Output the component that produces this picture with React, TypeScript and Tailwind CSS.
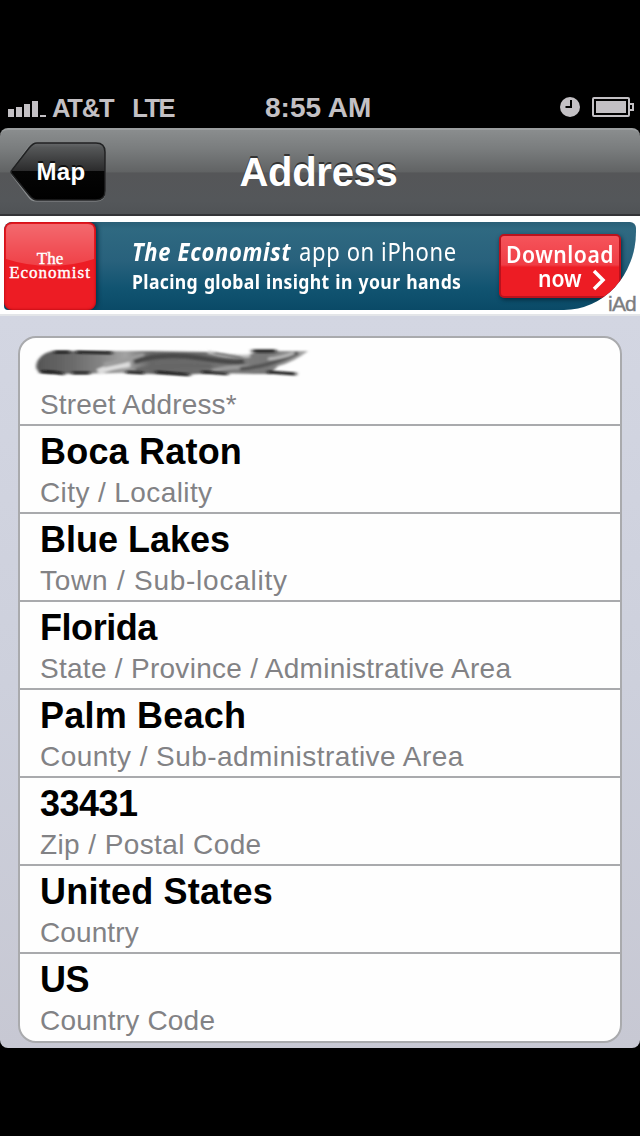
import React from 'react';

interface AddressField {
  value: string | null;
  label: string;
  valueClass?: string;
  labelClass?: string;
}

const fields: AddressField[] = [
  { value: null, label: 'Street Address*', labelClass: 'tracking-[0.15px]' },
  { value: 'Boca Raton', label: 'City / Locality', valueClass: 'tracking-[0.2px]', labelClass: 'tracking-[0.4px]' },
  { value: 'Blue Lakes', label: 'Town / Sub-locality', labelClass: 'tracking-[0.75px]' },
  { value: 'Florida', label: 'State / Province / Administrative Area', valueClass: 'tracking-[-0.45px]', labelClass: 'tracking-[0.28px]' },
  { value: 'Palm Beach', label: 'County / Sub-administrative Area', valueClass: 'tracking-[0.2px]', labelClass: 'tracking-[0.45px]' },
  { value: '33431', label: 'Zip / Postal Code', valueClass: 'tracking-[-0.5px]', labelClass: 'tracking-[0.4px]' },
  { value: 'United States', label: 'Country', valueClass: 'tracking-[0.23px]', labelClass: 'tracking-[0.1px]' },
  { value: 'US', label: 'Country Code', valueClass: 'tracking-[-0.5px]', labelClass: 'tracking-[0.2px]' },
];

const SignalBars = () => (
  <svg className="mt-[3px]" width="38" height="18" viewBox="0 0 38 18" fill="#c3c0c4">
    <rect x="0" y="9" width="6" height="8" />
    <rect x="8" y="7" width="6" height="10" />
    <rect x="16" y="4" width="6" height="13" />
    <rect x="24" y="1" width="6" height="16" />
    <rect x="32" y="15" width="6" height="2" />
  </svg>
);

const StatusBar = () => (
  <div className="h-12 pt-[6px] flex items-center justify-between pl-2 pr-[6px] text-[#c3c0c4] font-bold relative">
    <div className="flex items-center">
      <SignalBars />
      <span className="ml-[6px] pt-[2px] text-[25.5px] leading-10 tracking-[-1.2px]">AT&amp;T</span>
      <span className="ml-[19px] pt-[2px] text-[25.5px] leading-10 tracking-[-1.5px]">LTE</span>
    </div>
    <span className="absolute left-[265px] top-2 text-[28px] leading-10">8:55 AM</span>
    <div className="flex items-center gap-3">
      <svg width="20" height="20" viewBox="0 0 20 20">
        <circle cx="10" cy="10" r="10" fill="#c3c0c4" />
        <path d="M11 3V10H5.5" fill="none" stroke="#000" strokeWidth="2" />
      </svg>
      <svg width="42" height="20" viewBox="0 0 42 20" fill="none">
        <rect x="1" y="1" width="36" height="18" rx="1" stroke="#c3c0c4" strokeWidth="2" />
        <rect x="4" y="4" width="30" height="12" fill="#c3c0c4" />
        <path d="M38 7H41V13H38" stroke="#c3c0c4" strokeWidth="2" />
      </svg>
    </div>
  </div>
);

const BackButton = () => (
  <button className="relative w-24 h-[60px]">
    <svg className="absolute inset-0" width="96" height="60" viewBox="0 0 96 60">
      <defs>
        <linearGradient id="back" x1="0" y1="0" x2="0" y2="1">
          <stop offset="0" stopColor="#66686a" />
          <stop offset="0.08" stopColor="#555758" />
          <stop offset="0.49" stopColor="#2b2b2c" />
          <stop offset="0.5" stopColor="#050505" />
          <stop offset="1" stopColor="#000" />
        </linearGradient>
      </defs>
      <path
        d="M26 2.5H86Q95.5 2.5 95.5 11.5V50Q95.5 59.5 86 59.5H26Q21 59.5 18 55L2 34Q-1 30.5 2 27L17 6Q20 2 26 2.5Z"
        fill="#8b8e90"
      />
      <path
        d="M27 1H86Q95 1 95 10V49Q95 58 86 58H27Q23 58 19 53L2 32Q0 30 2 28L19 6Q23 1 27 1Z"
        fill="url(#back)"
        stroke="#202122"
        strokeWidth="1.5"
      />
    </svg>
    <span className="relative block pl-[6px] text-2xl leading-[56px] tracking-[0.4px] font-bold text-white [text-shadow:0_-2px_0_#111]">Map</span>
  </button>
);

const NavBar = () => (
  <header className="h-[88px] flex items-center pl-[10px] rounded-t-[8px] relative border-t-2 border-[#9b9e9f] border-b-2 border-b-[#333437] bg-[linear-gradient(180deg,#8a8d8e_0%,#7a7d7e_22%,#616364_50%,#555658_51%,#54575a_85%,#505356_100%)]">
    <BackButton />
    <h1 className="absolute left-0 right-0 -ml-[3px] text-center text-[40px] leading-[82px] tracking-[-0.3px] font-bold text-white [text-shadow:0_-2px_0_#333]">
      Address
    </h1>
  </header>
);

const AdBanner = () => (
  <section className="relative h-[100px] pt-[6px] pl-1 pr-1 bg-white border-b-2 border-[#e3e5e8]">
    <div className="relative flex h-[88px] overflow-hidden rounded-tl-[8px] rounded-bl-[4px] rounded-tr-[6px] rounded-br-[72px_78px] bg-[linear-gradient(180deg,#2a5f77_0%,#2f6981_8%,#28617c_45%,#115471_75%,#0a4a67_100%)]">
      <div className="relative w-[92px] h-[88px] shrink-0 rounded-lg overflow-hidden bg-[#ed1c24] shadow-[2px_0_4px_#063449,inset_0_0_3px_#a8000a] flex flex-col items-center justify-center text-white font-['Liberation_Serif',serif]">
        <svg className="absolute inset-0" width="92" height="88" viewBox="0 0 92 88">
          <defs>
            <linearGradient id="gloss" x1="0" y1="0" x2="0" y2="1">
              <stop offset="0" stopColor="#fff" stopOpacity="0.34" />
              <stop offset="1" stopColor="#fff" stopOpacity="0.16" />
            </linearGradient>
          </defs>
          <path d="M2 8Q2 2 8 2H84Q90 2 90 8V37Q46 51 2 37Z" fill="url(#gloss)" />
        </svg>
        <span className="relative text-[17px] leading-[14px] [-webkit-text-stroke:0.4px_#fff]">The</span>
        <span className="relative text-[17px] leading-[14px] tracking-[1px] whitespace-nowrap [-webkit-text-stroke:0.4px_#fff]">Economist</span>
      </div>
      <div className="ml-[36px] pt-3 text-white font-['Noto_Sans',sans-serif] whitespace-nowrap">
        <p className="w-[330px] origin-left scale-x-[0.88] text-[25px] leading-[34px]">
          <span className="font-bold italic tracking-[0.75px]">The Economist</span>
          <span className="ml-[9px] tracking-[0.7px]">app on iPhone</span>
        </p>
        <p className="w-[330px] origin-left scale-x-[0.88] text-[20px] leading-[28px] tracking-[0.4px] [word-spacing:1px] font-bold">Placing global insight in your hands</p>
      </div>
      <button className="absolute left-[495px] top-3 w-[122px] h-[64px] rounded-[5px] border-2 border-[#b9121d] bg-[linear-gradient(180deg,#f5545b_0%,#f03d45_48%,#ed1c24_52%,#ed1c24_100%)] shadow-[1px_2px_4px_#052c40] text-white font-semibold font-['Noto_Sans',sans-serif]">
        <span className="flex h-[26px] justify-center scale-x-[0.9] text-[23.5px] leading-[26px] pt-[2px] tracking-[0.6px] whitespace-nowrap">Download</span>
        <span className="flex h-[26px] items-center pl-[37px] gap-[5px] mt-[2px]">
          <span className="origin-left scale-x-[0.9] text-[23.5px] leading-[22px] -mt-[5px]">now</span>
          <svg width="14" height="22" viewBox="0 0 14 22" fill="none" stroke="#fff" strokeWidth="3.5">
            <path d="M2 2L11 11L2 20" />
          </svg>
        </span>
      </button>
    </div>
    <span className="absolute right-[4px] bottom-[-2px] text-[21px] leading-6 tracking-[-0.8px] text-[#7c7d80] [-webkit-text-stroke:0.4px_#7c7d80]">iAd</span>
  </section>
);

// Blacked out street line, smeared by hand
const Smudge = () => (
  <svg className="-ml-2 block" width="280" height="40" viewBox="0 0 280 40">
    <defs>
      <filter id="soft" x="-5%" y="-20%" width="110%" height="140%">
        <feGaussianBlur stdDeviation="1.6 1.1" />
      </filter>
      <filter id="fine" x="-5%" y="-20%" width="110%" height="140%">
        <feGaussianBlur stdDeviation="2.2 0.8" />
      </filter>
      <linearGradient id="ink" x1="0" y1="0" x2="1" y2="0">
        <stop offset="0" stopColor="#555" />
        <stop offset="0.14" stopColor="#6c6c6c" />
        <stop offset="0.24" stopColor="#858585" />
        <stop offset="0.33" stopColor="#a4a4a4" />
        <stop offset="0.42" stopColor="#666" />
        <stop offset="0.6" stopColor="#6a6a6a" />
        <stop offset="0.75" stopColor="#7c7c7c" />
        <stop offset="0.85" stopColor="#777" />
        <stop offset="1" stopColor="#aaa" />
      </linearGradient>
    </defs>
    <g filter="url(#soft)">
      <path d="M6 16Q12 7 24 7L110 7L178 8L214 12L226 7H276Q262 18 246 22L238 30L222 30L180 29L150 31L90 29L18 30Q-1 29 6 16Z" fill="url(#ink)" />
      <path d="M66 28Q78 22 98 20" stroke="#ddd" strokeWidth="6" fill="none" />
      <path d="M72 21Q94 17 112 11" stroke="#9c9c9c" strokeWidth="5" fill="none" />
      <path d="M102 18Q130 8 168 14T212 17" stroke="#4a4a4a" strokeWidth="5" fill="none" />
      <path d="M104 26Q134 21 180 22" stroke="#666" strokeWidth="4" fill="none" />
      <path d="M180 27Q204 21 222 24" stroke="#9a9a9a" strokeWidth="4" fill="none" />
      <path d="M176 8Q194 13 218 12" stroke="#c4c4c4" strokeWidth="3" fill="none" />
      <path d="M208 25Q236 23 266 9" stroke="#555" strokeWidth="4" fill="none" />
      <path d="M236 15Q250 14 262 9" stroke="#b5b5b5" strokeWidth="3" fill="none" />
    </g>
    <g filter="url(#fine)" stroke="#111" fill="none" strokeWidth="2.5">
      <path d="M22 8L38 8" />
      <path d="M44 8L80 9" />
      <path d="M8 28Q18 27 32 30" />
      <path d="M40 29L58 29" />
      <path d="M94 28L112 29" />
      <path d="M124 28L158 31" />
      <path d="M170 28L196 30" />
      <path d="M182 9L210 14" strokeWidth="1.5" stroke="#555" />
      <path d="M220 7L244 7" strokeWidth="3" />
      <path d="M236 28L264 30" strokeWidth="3" />
    </g>
  </svg>
);

const FieldRow: React.FC<{ field: AddressField }> = ({ field }) => (
  <li className="h-[88px] last:h-[87px] pt-[6px] pl-5 border-b-2 border-[#a9aaad] last:border-b-0 whitespace-nowrap">
    <div className={`h-10 text-4xl leading-10 font-bold text-black ${field.valueClass ?? ''}`}>
      {field.value ?? <Smudge />}
    </div>
    <div className={`text-[28px] leading-[42px] text-[#828285] ${field.labelClass ?? ''}`}>{field.label}</div>
  </li>
);

const App: React.FC = () => {
  return (
    <div className="w-[640px] h-[1136px] bg-black pt-20 overflow-hidden font-['Liberation_Sans',Arial,sans-serif]">
      <StatusBar />
      <NavBar />
      <AdBanner />
      <main className="h-[732px] px-[18px] pt-5 rounded-b-[8px] bg-[linear-gradient(180deg,#d3d6e2_0%,#cdd0dc_50%,#c7c8d3_100%)]">
        <ul className="bg-[#fefefe] border-2 border-[#a9aaad] rounded-[18px] overflow-hidden">
          {fields.map((field) => (
            <FieldRow key={field.label} field={field} />
          ))}
        </ul>
      </main>
    </div>
  );
};

export default App;
